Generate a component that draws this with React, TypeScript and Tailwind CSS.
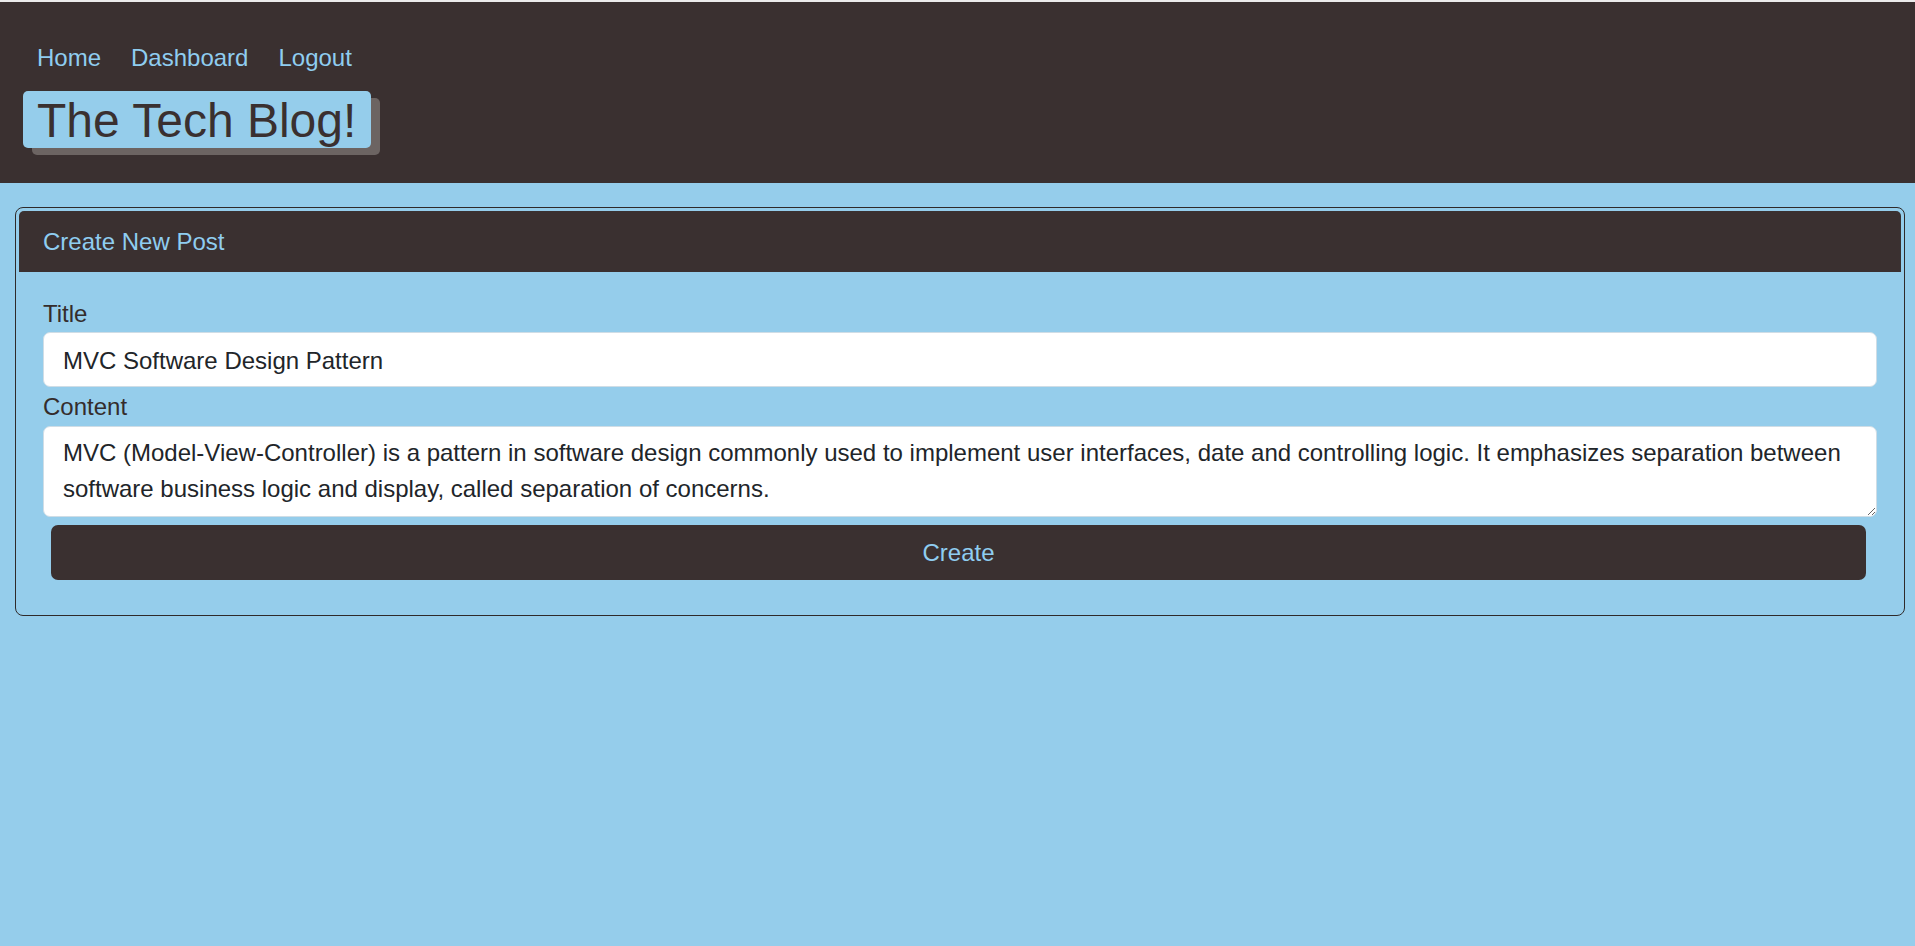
import { useState } from 'react';

const App: React.FC = () => {
  const [title, setTitle] = useState<string>('MVC Software Design Pattern');
  const [content, setContent] = useState<string>(
    'MVC (Model-View-Controller) is a pattern in software design commonly used to implement user interfaces, date and controlling logic. It emphasizes separation between software business logic and display, called separation of concerns.'
  );

  return (
    <div className="min-h-screen bg-[#95cdeb] font-['Liberation_Sans',Arial,sans-serif] text-[24px]">
      {/* Header */}
      <header className="h-[183px] border-t-2 border-[#ebebeb] bg-[#3a3030] pl-[23px]">
        <nav className="flex gap-[30px] pl-[14px] pt-[38px] leading-[36px]">
          <a href="#" className="text-[#8fcdf0]">Home</a>
          <a href="#" className="text-[#8fcdf0]">Dashboard</a>
          <a href="#" className="text-[#8fcdf0]">Logout</a>
        </nav>
        <h1 className="mt-[15px] inline-block h-[57px] rounded-[5px] bg-[#95cdeb] pl-[14px] pr-[15px] pt-[2px] text-[48px] leading-[55px] text-[#3a3030] shadow-[9px_7px_0_#6c6462]">
          The Tech Blog!
        </h1>
      </header>

      {/* New post card */}
      <main className="pl-[15px] pr-[10px] pt-[24px]">
        <div className="rounded-[8px] border border-[#2f2a2a] p-[3px]">
          <div className="flex h-[61px] items-center rounded-t-[5px] bg-[#3a3030] px-[24px] text-[#8fcdf0]">
            Create New Post
          </div>
          <form className="flex flex-col px-[24px] pb-[32px] pt-[24px]" onSubmit={e => e.preventDefault()}>
            <label className="leading-[36px] text-[#342c2c]">Title</label>
            <input
              value={title}
              onChange={e => setTitle(e.target.value)}
              className="h-[55px] rounded-[7px] border border-[#cfdde6] bg-white px-[19px] pt-[3px] leading-[36px] text-[#212529] outline-none"
            />
            <label className="mt-[2px] leading-[36px] text-[#342c2c]">Content</label>
            <textarea
              value={content}
              onChange={e => setContent(e.target.value)}
              className="mt-px h-[91px] rounded-[7px] border border-[#cfdde6] bg-white px-[19px] pb-[8px] pt-[8px] leading-[36px] text-[#212529] outline-none"
            />
            <button
              type="submit"
              className="ml-[8px] mr-[11px] mt-[8px] h-[55px] rounded-[7px] bg-[#3a3030] text-[#8fcdf0]"
            >
              Create
            </button>
          </form>
        </div>
      </main>
    </div>
  );
};

export default App;
